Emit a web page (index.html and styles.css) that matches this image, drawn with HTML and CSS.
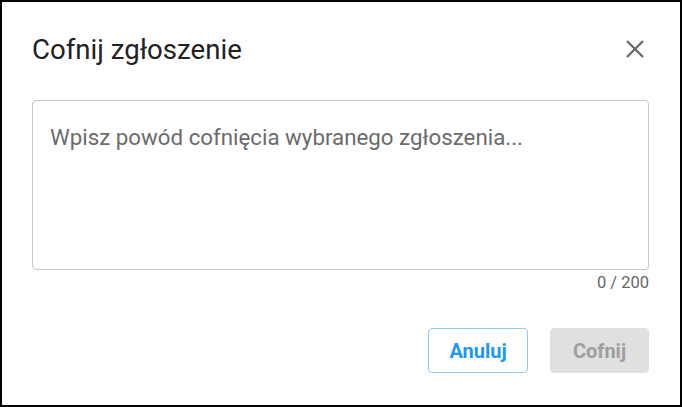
FILE: index.html
```html
<!DOCTYPE html>
<html lang="pl">
<head>
<meta charset="utf-8">
<link rel="stylesheet" href="styles.css">
</head>
<body>
<div class="dialog">
  <div class="header">
    <h1 class="title">Cofnij zgłoszenie</h1>
    <button class="close" aria-label="Zamknij">
      <svg width="20" height="20" viewBox="0 0 20 20"><path d="M2 2 L18 18 M18 2 L2 18" stroke="#666" stroke-width="2.2" fill="none"/></svg>
    </button>
  </div>
  <div class="field">
    <textarea class="input" placeholder="Wpisz powód cofnięcia wybranego zgłoszenia..."></textarea>
    <div class="counter">0 / 200</div>
  </div>
  <div class="actions">
    <button class="btn btn-outline">Anuluj</button>
    <button class="btn btn-disabled" disabled>Cofnij</button>
  </div>
</div>
</body>
</html>
```

FILE: styles.css
```css
* { box-sizing: border-box; }
html, body { margin: 0; padding: 0; }
body {
  font-family: Roboto, "Noto Sans", sans-serif;
  background: #fff;
}
.dialog {
  width: 682px;
  height: 407px;
  border: 2px solid #000;
  background: #fff;
  padding: 0 31px 0 30px;
  display: flex;
  flex-direction: column;
}
.header {
  display: flex;
  align-items: center;
  justify-content: space-between;
  height: 98px;
  padding-bottom: 4px;
}
.title {
  margin: 0;
  font-size: 27.6px;
  font-weight: 400;
  color: #222;
}
.close {
  background: none;
  border: 0;
  padding: 0;
  margin-right: 4px;
  display: flex;
}
.field {
  display: flex;
  flex-direction: column;
}
.input {
  display: block;
  width: 100%;
  height: 170px;
  border: 1px solid #c8c8c8;
  border-radius: 4px;
  padding: 23px 17px;
  font-family: Roboto, sans-serif;
  font-size: 22.3px;
  resize: none;
  outline: none;
}
.input::placeholder { color: #6b6b6b; }
.counter {
  text-align: right;
  font-size: 16.5px;
  color: #666;
  margin-top: 3px;
}
.actions {
  display: flex;
  justify-content: flex-end;
  gap: 22px;
  margin-top: 36px;
}
.btn {
  height: 45px;
  width: 100px;
  border-radius: 4px;
  font-family: Roboto, sans-serif;
  font-size: 20px;
  font-weight: 700;
}
.btn-outline {
  background: #fff;
  border: 1px solid #90caf9;
  color: #2196f3;
}
.btn-disabled {
  background: #e0e0e0;
  border: 1px solid #e0e0e0;
  color: #9e9e9e;
  width: 99px;
}
```
